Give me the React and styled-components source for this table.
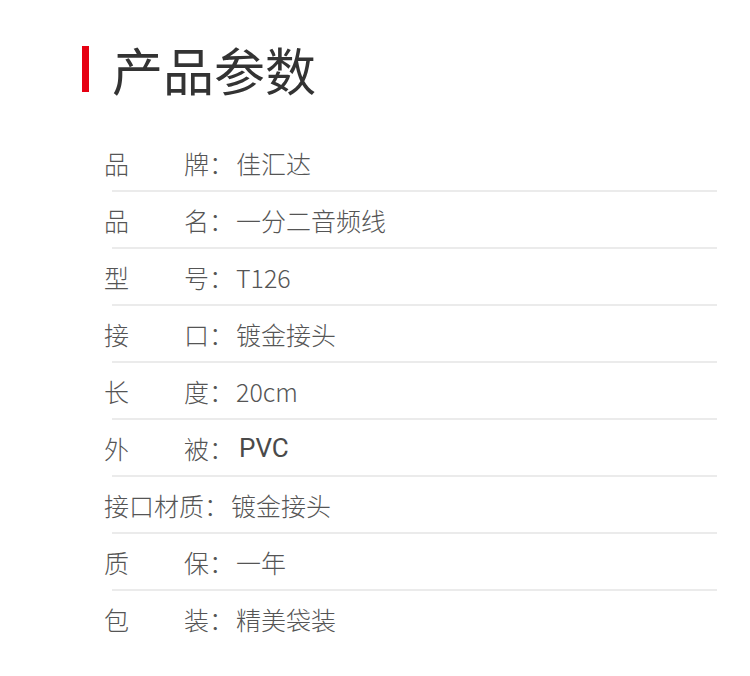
import React from "react";
import styled, { createGlobalStyle } from "styled-components";

const GlobalStyle = createGlobalStyle`
body {
    margin: 0;
    background: #fff;
    font-family: "Noto Sans CJK SC", "Noto Sans", sans-serif;
}
`;

const Page = styled.div`
width: 750px;
height: 676px;
background: #fff;
overflow: hidden;
`;

const Heading = styled.div`
display: flex;
align-items: center;
padding: 40px 0 0 82px;
height: 58px;
`;

const RedBar = styled.div`
width: 7px;
height: 46px;
background: #e60012;
margin-right: 23px;
`;

const Title = styled.h1`
margin: 0;
font-size: 51px;
font-weight: 400;
color: #333;
line-height: 56px;
`;

const List = styled.div`
padding: 37px 33px 0 104px;
`;

const Row = styled.div`
display: flex;
flex-direction: column;
`;

const Content = styled.div`
display: flex;
align-items: center;
height: 55px;
font-size: 25px;
font-weight: 300;
color: #555;
`;

const Label = styled.div`
display: flex;
justify-content: space-between;
width: ${(p) => (p.$split ? "130px" : "auto")};
flex-shrink: 0;
`;

const Value = styled.span`
margin-left: ${(p) => (p.$gap ? p.$gap : 2)}px;
font-family: ${(p) => (p.$latin ? "Roboto, \"Liberation Sans\", sans-serif" : "inherit")};
font-size: ${(p) => (p.$latin ? "26px" : "25px")};
font-weight: ${(p) => (p.$latin ? 400 : 300)};
color: ${(p) => (p.$latin ? "#4a4a4a" : "#555")};
`;

const Divider = styled.div`
height: 2px;
margin-left: 8px;
background: #ebebeb;
`;

const specs = [
    { k: ["品", "牌："], v: "佳汇达" },
    { k: ["品", "名："], v: "一分二音频线" },
    { k: ["型", "号："], v: "T126" },
    { k: ["接", "口："], v: "镀金接头" },
    { k: ["长", "度："], v: "20cm" },
    { k: ["外", "被："], v: "PVC", latin: true, gap: 5 },
    { k: ["接口材质："], v: "镀金接头" },
    { k: ["质", "保："], v: "一年" },
    { k: ["包", "装："], v: "精美袋装", last: true },
];

function App() {
    return (
        <Page>
            <GlobalStyle />
            <Heading>
                <RedBar />
                <Title>产品参数</Title>
            </Heading>
            <List>
                {specs.map((s, i) => (
                    <Row key={i}>
                        <Content>
                            <Label $split={s.k.length > 1}>
                                {s.k.map((c) => (
                                    <span key={c}>{c}</span>
                                ))}
                            </Label>
                            <Value $latin={s.latin} $gap={s.gap}>{s.v}</Value>
                        </Content>
                        {!s.last && <Divider />}
                    </Row>
                ))}
            </List>
        </Page>
    );
}

export default App;
